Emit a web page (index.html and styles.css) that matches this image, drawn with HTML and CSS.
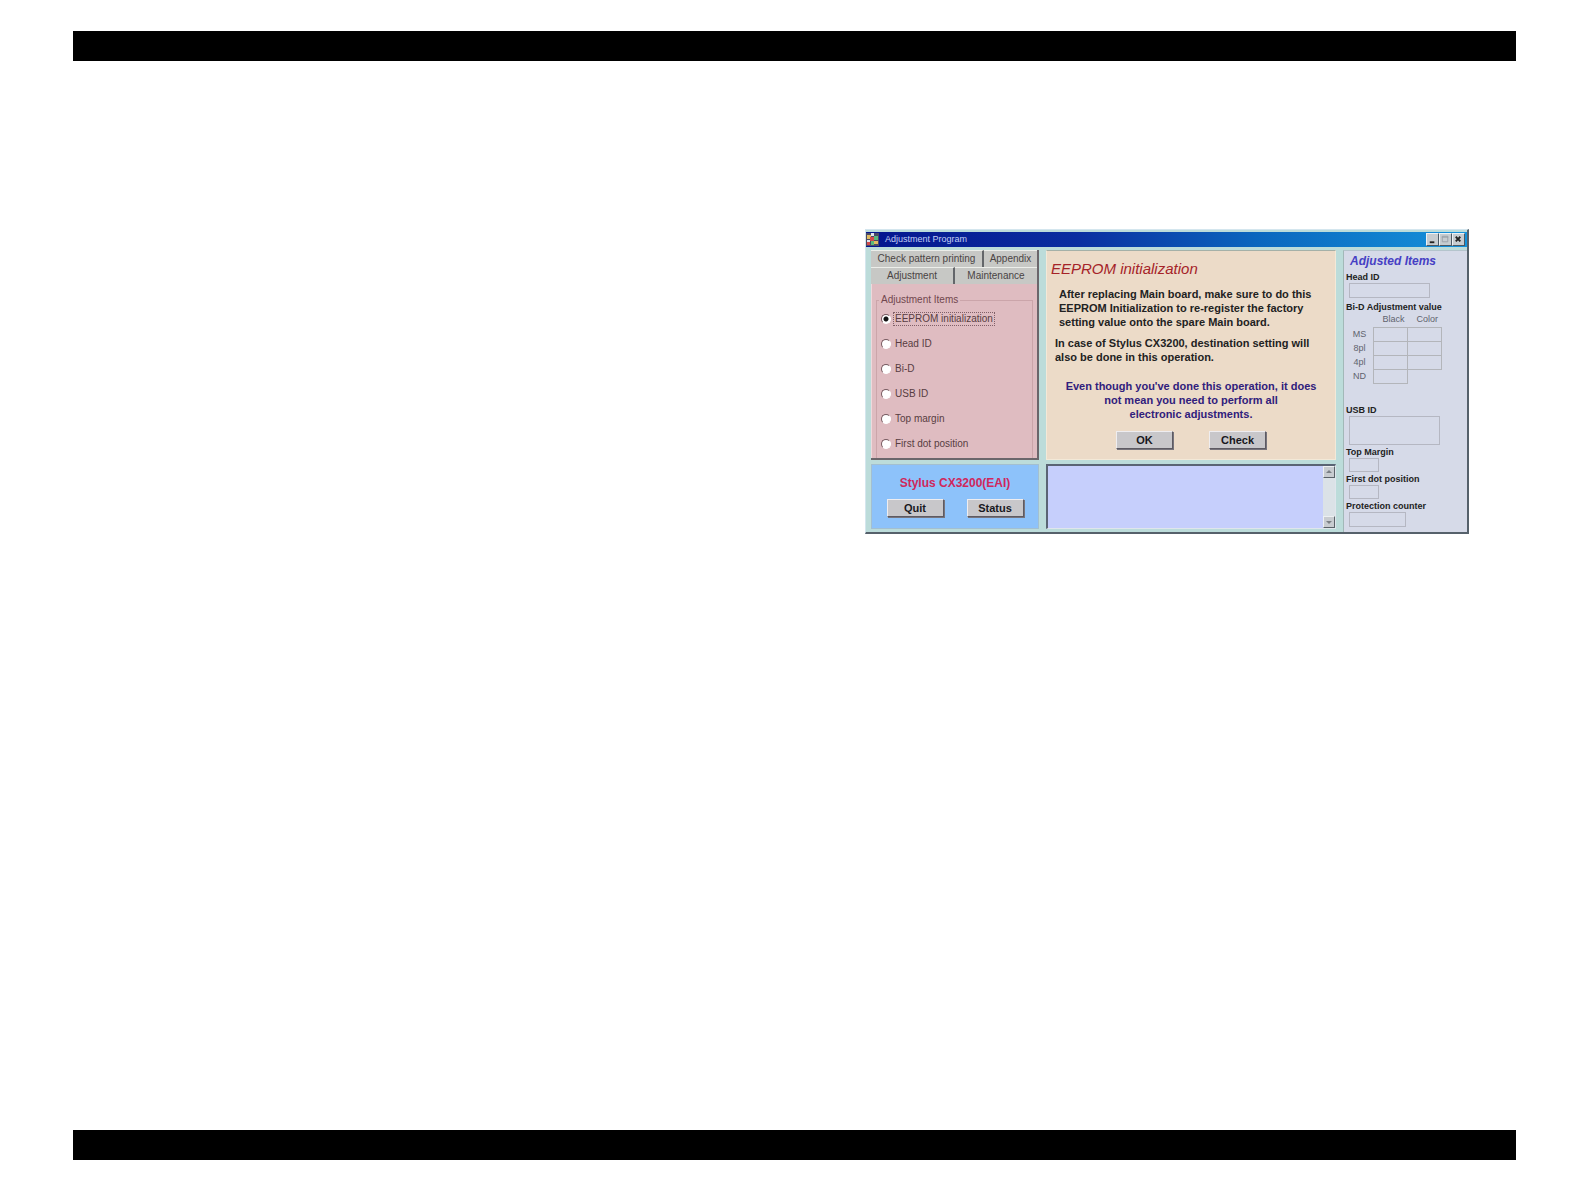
FILE: index.html
```html
<!DOCTYPE html>
<html lang="en">
<head>
<meta charset="utf-8">
<title>Adjustment Program</title>
<link rel="stylesheet" href="styles.css">
</head>
<body>
<header class="rule"></header>
<main class="sheet">
  <section class="window" aria-label="Adjustment Program">
    <div class="titlebar">
      <svg class="app-icon" viewBox="0 0 13 13" aria-hidden="true">
        <path fill="#4a4a66" d="M0 0h13v13H0z"/>
        <path fill="#e0bd62" d="M1 2h4v4H1zM8 8h4v3H8z"/>
        <path fill="#d34b4b" d="M4 4h4v4H4zM1 9h3v3H1z"/>
        <path fill="#59b97b" d="M8 3h4v4H8zM5 8h3v4H5z"/>
        <path fill="#dfe6f0" d="M5 0h3v3H5zM1 7h3v2H1z"/>
      </svg>
      <h1 class="caption">Adjustment Program</h1>
      <div class="controls">
        <button class="control" aria-label="Minimize"><svg viewBox="0 0 12 12"><path d="M3 9h5" /></svg></button>
        <button class="control" aria-label="Maximize"><svg viewBox="0 0 12 12"><path class="faint" d="M2.500 2.500h6v6h-6zM2 3.500h7"/></svg></button>
        <button class="control" aria-label="Close"><svg viewBox="0 0 12 12"><path d="M3 3l5 5M8 3l-5 5"/></svg></button>
      </div>
    </div>
    <div class="content">
      <div class="left">
        <div class="tabs-panel">
          <div class="tab-row">
            <button class="tab wide">Check pattern printing</button>
            <button class="tab">Appendix</button>
          </div>
          <div class="tab-row front">
            <button class="tab">Adjustment</button>
            <button class="tab">Maintenance</button>
          </div>
          <div class="tab-body">
            <fieldset class="items">
              <legend>Adjustment Items</legend>
              <label class="item"><input type="radio" name="item" checked><span class="focused">EEPROM initialization</span></label>
              <label class="item"><input type="radio" name="item"><span>Head ID</span></label>
              <label class="item"><input type="radio" name="item"><span>Bi-D</span></label>
              <label class="item"><input type="radio" name="item"><span>USB ID</span></label>
              <label class="item"><input type="radio" name="item"><span>Top margin</span></label>
              <label class="item"><input type="radio" name="item"><span>First dot position</span></label>
            </fieldset>
          </div>
        </div>
        <div class="model-panel">
          <p class="model">Stylus CX3200(EAI)</p>
          <div class="model-actions">
            <button class="push">Quit</button>
            <button class="push">Status</button>
          </div>
        </div>
      </div>
      <div class="middle">
        <article class="task">
          <h2 class="task-title">EEPROM initialization</h2>
          <p class="intro">After replacing Main board, make sure to do this<br>EEPROM Initialization to re-register the factory<br>setting value onto the spare Main board.</p>
          <p class="case">In case of Stylus CX3200, destination setting will<br>also be done in this operation.</p>
          <p class="hint">Even though you've done this operation, it does<br>not mean you need to perform all<br>electronic adjustments.</p>
          <div class="task-actions">
            <button class="push">OK</button>
            <button class="push">Check</button>
          </div>
        </article>
        <div class="log">
          <textarea class="log-text" aria-label="Log" readonly></textarea>
          <div class="scroll">
            <button class="arrow" aria-label="Scroll up"><svg viewBox="0 0 10 10"><path d="M2 6l3-3 3 3z"/></svg></button>
            <button class="arrow" aria-label="Scroll down"><svg viewBox="0 0 10 10"><path d="M2 4l3 3 3-3z"/></svg></button>
          </div>
        </div>
      </div>
      <aside class="adjusted">
        <h2 class="adjusted-title">Adjusted Items</h2>
        <label class="name" for="head">Head ID</label>
        <input class="field head" id="head" readonly>
        <table class="bid">
          <caption>Bi-D Adjustment value</caption>
          <thead><tr><td></td><th scope="col">Black</th><th scope="col">Color</th></tr></thead>
          <tbody>
            <tr><th scope="row">MS</th><td class="cell"></td><td class="cell"></td></tr>
            <tr><th scope="row">8pl</th><td class="cell"></td><td class="cell"></td></tr>
            <tr><th scope="row">4pl</th><td class="cell"></td><td class="cell"></td></tr>
            <tr><th scope="row">ND</th><td class="cell"></td><td></td></tr>
          </tbody>
        </table>
        <label class="name" for="usb">USB ID</label>
        <input class="field usb" id="usb" readonly>
        <label class="name" for="top">Top Margin</label>
        <input class="field short" id="top" readonly>
        <label class="name" for="dot">First dot position</label>
        <input class="field short" id="dot" readonly>
        <label class="name" for="counter">Protection counter</label>
        <input class="field counter" id="counter" readonly>
      </aside>
    </div>
  </section>
</main>
<footer class="rule"></footer>
</body>
</html>
```
FILE: styles.css
```css
* { box-sizing: border-box; }
body {
  margin: 0;
  min-height: 100vh;
  padding: 31px 70px 30px 73px;
  display: flex;
  flex-direction: column;
  background: #fff;
  color: #222;
  font: 10px/12px "Liberation Sans", Arial, sans-serif;
}
h1, h2, p { margin: 0; }
button, input, textarea { font: inherit; color: inherit; padding: 0; margin: 0; border-radius: 0; }

.rule { height: 30px; background: #000; }
.sheet { flex: 1; padding: 168px 47px 0 0; }

.window {
  width: 604px;
  max-width: 100%;
  margin-left: auto;
  background: #bcdcda;
  border: 1px solid #d4e6ee;
  border-right: 2px solid #56616b;
  border-bottom: 2px solid #56616b;
}
.titlebar {
  height: 15px;
  margin-top: 2px;
  display: flex;
  align-items: center;
  gap: 6px;
  padding-right: 2px;
  background: linear-gradient(90deg, #04168e, #0a2ea0 35%, #0a66be 65%, #1592da);
}
.app-icon { width: 13px; height: 13px; }
.caption { flex: 1; font-size: 9px; line-height: 13px; font-weight: 400; color: #c3cff5; }
.controls { display: flex; }
.control {
  width: 13px;
  height: 13px;
  background: #c6ccd0;
  border: 1px solid;
  border-color: #eef2f4 #4b5964 #4b5964 #eef2f4;
}
.control svg { display: block; width: 11px; height: 11px; }
.control path { fill: none; stroke: #222; stroke-width: 2; }
.control .faint { stroke: #9aa0a6; stroke-width: 1; }

.content {
  display: grid;
  grid-template-columns: 168px 1fr 124px;
  gap: 7px;
  padding: 3px 0 0 5px;
}
.left, .middle { display: grid; grid-template-rows: 210px 65px; gap: 4px; padding-bottom: 3px; }

.tabs-panel {
  display: flex;
  flex-direction: column;
  background: #dfbcc1;
  border-right: 2px solid #6b666b;
  border-bottom: 2px solid #6b666b;
}
.tab-row { display: flex; height: 17px; }
.tab {
  flex: 1;
  background: #c7c8c5;
  border: 0;
  border-top: 1px solid #eceeea;
  border-right: 2px solid #63666a;
  color: #4a4444;
  text-align: center;
}
.tab.wide { flex: 0 0 113px; }
.tab:last-child { border-right: 0; }
.tab-body { flex: 1; padding: 10px 4px 0; border-left: 1px solid #efd9dc; }
.items {
  height: 100%;
  margin: 0;
  padding: 0 0 0 4px;
  border: 1px solid #cba5aa;
  border-bottom: 0;
}
.items legend { padding: 0 2px; margin-left: -2px; color: #71474e; }
.item { display: flex; align-items: center; gap: 2px; height: 25px; color: #583c42; }
.item span { padding: 0 1px; border: 1px solid transparent; }
.item .focused { border: 1px dotted #806068; }
.item input {
  appearance: none;
  width: 10px;
  height: 10px;
  border: 1px solid;
  border-color: #76595f #fff #fff #76595f;
  border-radius: 50%;
  background: #fff;
}
.item input:checked { background: radial-gradient(circle, #111 2px, #fff 3px); }

.push {
  width: 57px;
  height: 18px;
  background: #c8c7ca;
  border: 1px solid;
  border-color: #eeedf0 #5d5a62 #5d5a62 #eeedf0;
  box-shadow: 1px 1px 0 #77747c;
  color: #181820;
  font-size: 11px;
  font-weight: 700;
}
.model-panel {
  background: #8dc2fa;
  border: 1px solid #a3bfd0;
  padding: 11px 0 0;
  text-align: center;
}
.model { font-size: 12px; line-height: 14px; font-weight: 700; color: #d0275c; }
.model-actions { display: flex; justify-content: center; gap: 23px; padding-top: 9px; }

.task {
  background: #ecdbc8;
  border: 1px solid #f3e9d8;
  border-top-color: #a4b0a8;
  padding: 8px 4px 0;
  font-size: 11px;
  line-height: 14px;
  font-weight: 700;
  white-space: nowrap;
}
.task-title { font-size: 15px; line-height: 20px; font-weight: 400; font-style: italic; color: #a52328; }
.intro { padding: 8px 0 0 8px; }
.case { padding: 7px 0 0 4px; }
.hint { padding-top: 15px; text-align: center; color: #30207c; }
.task-actions { display: flex; justify-content: center; gap: 36px; padding-top: 10px; }

.log {
  display: flex;
  background: #c6cffc;
  border: 1px solid #dfe6ec;
  border-top: 2px solid #5a6474;
  border-left: 2px solid #5a6474;
}
.log-text { flex: 1; min-width: 0; border: 0; background: none; resize: none; outline: 0; overflow: hidden; }
.scroll { width: 12px; display: flex; flex-direction: column; justify-content: space-between; background: #dbe2e7; }
.arrow {
  width: 12px;
  height: 12px;
  background: #c8ccd0;
  border: 1px solid;
  border-color: #edf0f2 #5a6268 #5a6268 #edf0f2;
}
.arrow svg { display: block; width: 10px; height: 10px; fill: #7b8085; }

.adjusted {
  background: #d6dae8;
  border-left: 1px solid #a2b8b8;
  border-top: 1px solid #b4c4cc;
  padding: 1px 0 0 2px;
  font-size: 9px;
  line-height: 10px;
}
.adjusted-title { padding-left: 4px; font-size: 12px; line-height: 18px; font-style: italic; color: #463fc4; }
.name, .bid caption { font-weight: 700; text-align: left; white-space: nowrap; }
.name { display: block; margin-top: 2px; }
.field { display: block; height: 15px; margin: 1px 0 0 3px; border: 1px solid #b5b7c2; background: none; }
.head { width: 81px; }
.usb { width: 91px; height: 29px; }
.short { width: 30px; height: 14px; }
.counter { width: 57px; }
.bid { border-collapse: collapse; table-layout: fixed; width: 90px; margin: 4px 0 21px; }
.bid th, .bid td { height: 14px; padding: 0; font-weight: 400; color: #60636e; text-align: center; }
.bid tr > :first-child { width: 26px; }
.bid thead th { width: 32px; height: 15px; padding-left: 6px; }
.bid .cell { border: 1px solid #b3b5ba; }
```
